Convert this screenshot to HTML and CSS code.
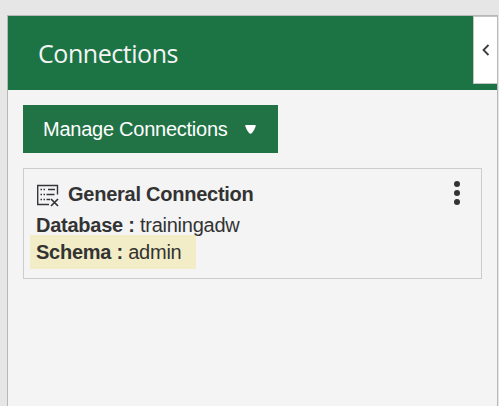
FILE: index.html
```html
<!DOCTYPE html>
<html lang="en">
<head>
<meta charset="utf-8">
<title>Connections</title>
<link rel="stylesheet" href="styles.css">
</head>
<body>
<main class="panel">
  <header class="panel-header">
    <h1 class="title">Connections</h1>
    <button class="collapse" aria-label="Collapse">
      <svg width="8" height="12" viewBox="0 0 8 12"><path d="M6.500 1 1.500 6l5 5" fill="none" stroke="#3c3c3c" stroke-width="1.800"/></svg>
    </button>
  </header>
  <div class="content">
    <button class="manage">
      <span>Manage Connections</span>
      <svg width="11" height="9" viewBox="0 0 11 9"><path d="M1.300 0h8.400q1.700 0 .9 1.600-.9 3-3.600 6.400Q5.500 9.600 4 8 1.300 4.600.4 1.600-.4 0 1.300 0z" fill="#fff"/></svg>
    </button>
    <section class="card">
      <div class="details">
        <h2 class="name">
          <svg width="24" height="24" viewBox="0 0 24 24" fill="none" stroke="#35353b" stroke-width="1.400">
            <path d="M13 20.500H1.700v-19h19.800v9"/>
            <path d="M4.500 5.500H6M7.500 5.500H9M4.500 10.500H6M7.500 10.500H9M4.500 15.500H6M7.500 15.500H9" stroke-width="1.500"/>
            <path d="M12 5.500h7M10.500 10.500h8M10.500 15.500h3.500" stroke-width="1.500"/>
            <path d="m15 15 7 7m0-7-7 7" stroke-width="1.700"/>
          </svg>
          <span>General Connection</span>
        </h2>
        <div class="row"><b>Database :</b> trainingadw</div>
        <div class="row schema"><b>Schema :</b> admin</div>
      </div>
      <button class="more" aria-label="More actions"><i></i><i></i><i></i></button>
    </section>
  </div>
</main>
</body>
</html>
```
FILE: styles.css
```css
* { box-sizing: border-box; }
body {
  margin: 0;
  height: 406px;
  padding: 15px 1px 0 7px;
  overflow: hidden;
  background: #e6e6e6;
  color: #333;
  font-family: "Liberation Sans", Arial, sans-serif;
  font-size: 20px;
  letter-spacing: -0.25px;
}
button { border: 0; padding: 0; font: inherit; letter-spacing: inherit; }
svg { display: block; flex: none; }
.panel {
  height: 391px;
  border: 1px solid #b9b9b9;
  border-bottom: 0;
  background: #f4f4f4;
}
.panel-header {
  display: flex;
  justify-content: space-between;
  height: 74px;
  padding-left: 30px;
  background: #1c7444;
}
.title {
  margin: 0;
  color: #f4f4f4;
  font: 400 25px/75px "Open Sans", "Noto Sans", sans-serif;
  letter-spacing: -0.45px;
}
.collapse {
  display: flex;
  align-items: center;
  width: 24px;
  height: 68px;
  padding-left: 8px;
  background: #fff;
  border: 1px solid #c4c4c4;
  border-right: 0;
}
.content { padding: 15px; }
.manage {
  display: flex;
  align-items: center;
  gap: 17px;
  width: 255px;
  height: 48px;
  padding-left: 20px;
  background: #217346;
  color: #fff;
}
.card {
  display: flex;
  justify-content: space-between;
  width: 459px;
  height: 111px;
  margin-top: 15px;
  padding: 12px 21px 0 6px;
  border: 1px solid #ccc;
}
.name {
  display: flex;
  gap: 8px;
  margin: 0;
  padding-left: 6px;
  font-size: 20px;
  line-height: 27px;
  height: 27px;
}
.name svg { margin-top: 3px; }
.row { padding-left: 6px; height: 27px; line-height: 34px; }
.schema { width: 166px; height: 34px; line-height: 34px; background: #f2edc6; }
.more {
  display: flex;
  flex-direction: column;
  gap: 3px;
  height: 24px;
  background: none;
}
.more i { width: 6px; height: 6px; border-radius: 50%; background: #333; }
```
